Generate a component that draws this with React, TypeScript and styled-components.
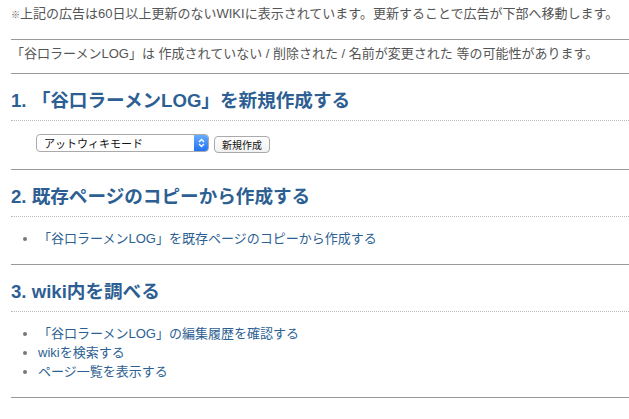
import React from "react";
import styled, { createGlobalStyle } from "styled-components";

const Global = createGlobalStyle`
  html, body { margin: 0; padding: 0; background: #fff; overflow: hidden; }
  body { font-family: "Liberation Sans", "Noto Sans CJK JP", sans-serif; color: #555; }
`;

const Page = styled.div`
  padding: 4px 0 0 11px;
  width: 640px;
`;

const Notice = styled.p`
  margin: 0;
  font-size: 13px;
  line-height: 20px;
  color: #555;
  white-space: nowrap;
`;

const Small = styled.span`
  font-size: 9px;
`;

const Rule = styled.div<{ $top: number }>`
  border-top: 1px solid #999;
  margin-top: ${(p) => p.$top}px;
`;

const Info = styled.p`
  margin: 4px 0 0;
  font-size: 13px;
  line-height: 20px;
  color: #555;
  white-space: nowrap;
`;

const Heading = styled.h2`
  margin: 14px 0 0;
  padding-bottom: 6px;
  border-bottom: 1px dotted #bbb;
  font-size: 18.6px;
  line-height: 26px;
  font-weight: bold;
  color: #2d5f93;
  white-space: nowrap;
`;

const FormRow = styled.div`
  display: flex;
  align-items: flex-start;
  gap: 5px;
  margin: 13px 0 0 25px;
`;

const Select = styled.div`
  position: relative;
  width: 173px;
  height: 18px;
  box-sizing: border-box;
  border: 1px solid #aaa;
  border-radius: 4px;
  background: #fff;
  display: flex;
  align-items: center;
  font-size: 11px;
  color: #111;
  padding-left: 7px;
  overflow: hidden;
`;

const Arrow = styled.div`
  position: absolute;
  right: -1px;
  top: -1px;
  bottom: -1px;
  width: 15px;
  border-radius: 0 4px 4px 0;
  background: linear-gradient(#6bb0ff, #1d6ff0);
  display: flex;
  align-items: center;
  justify-content: center;
`;

const Button = styled.button`
  height: 17px;
  width: 56px;
  margin-top: 2px;
  padding: 0;
  border: 1px solid #aaa;
  border-radius: 4px;
  background: linear-gradient(#fff, #f1f1f1);
  font-family: "Liberation Sans", "Noto Sans CJK JP", sans-serif;
  font-size: 10px;
  color: #111;
`;

const List = styled.ul`
  margin: 12px 0 0;
  padding: 0 0 0 27px;
  list-style: disc;
  color: #777;
  font-size: 13px;
  line-height: 19px;
`;

const Item = styled.li`
  white-space: nowrap;
`;

const Link = styled.a`
  color: #2d5f93;
  text-decoration: none;
`;

export default function App() {
  return (
    <>
      <Global />
      <Page>
        <Notice>
          <Small>※</Small>上記の広告は60日以上更新のないWIKIに表示されています。更新することで広告が下部へ移動します。
        </Notice>
        <Rule $top={14} />
        <Info>「谷口ラーメンLOG」は 作成されていない / 削除された / 名前が変更された 等の可能性があります。</Info>
        <Rule $top={9} />
        <Heading>1. 「谷口ラーメンLOG」を新規作成する</Heading>
        <FormRow>
          <Select>
            アットウィキモード
            <Arrow>
              <svg width="7" height="10" viewBox="0 0 7 10">
                <path d="M1 4 L3.5 1.5 L6 4 M1 6 L3.5 8.5 L6 6" stroke="#fff" strokeWidth="1.3" fill="none" />
              </svg>
            </Arrow>
          </Select>
          <Button>新規作成</Button>
        </FormRow>
        <Rule $top={16} />
        <Heading>2. 既存ページのコピーから作成する</Heading>
        <List>
          <Item>
            <Link href="#">「谷口ラーメンLOG」を既存ページのコピーから作成する</Link>
          </Item>
        </List>
        <Rule $top={16} />
        <Heading>3. wiki内を調べる</Heading>
        <List>
          <Item>
            <Link href="#">「谷口ラーメンLOG」の編集履歴を確認する</Link>
          </Item>
          <Item>
            <Link href="#">wikiを検索する</Link>
          </Item>
          <Item>
            <Link href="#">ページ一覧を表示する</Link>
          </Item>
        </List>
        <Rule $top={16} />
      </Page>
    </>
  );
}
